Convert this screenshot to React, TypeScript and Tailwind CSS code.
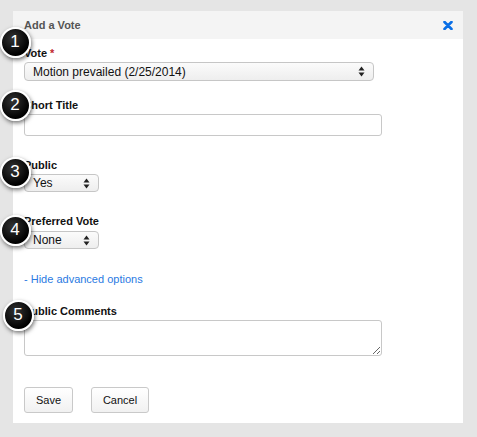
import React from "react";

const font = { fontFamily: '"Liberation Sans", Arial, sans-serif' };

// Small up/down arrows drawn at the right of each select box
const SelectArrows = () => (
  <svg width="7" height="11" viewBox="0 0 7 11" className="shrink-0">
    <path d="M3.5 0.5 L6.5 4.5 L0.5 4.5 Z" fill="#222" />
    <path d="M3.5 10.5 L6.5 6.5 L0.5 6.5 Z" fill="#222" />
  </svg>
);

const FakeSelect = ({ value, width }: { value: string; width: string }) => (
  <div
    className={`${width} flex items-center justify-between rounded-[4px] border border-[#c6c6c6] bg-gradient-to-b from-[#fbfbfb] to-[#eeeeee] pl-[8px] pr-[8px] text-[12px] text-[#111]`}
  >
    <span className="leading-none">{value}</span>
    <SelectArrows />
  </div>
);

const Label = ({ children, className = "" }: { children: React.ReactNode; className?: string }) => (
  <label className={`block h-[14px] text-[11px] font-bold leading-[14px] text-[#111] ${className}`}>
    {children}
  </label>
);

// Numbered callout bubble laid over the form
const Callout = ({ n, x, y }: { n: number; x: number; y: number }) => (
  <div
    className="absolute flex h-[31px] w-[31px] items-center justify-center rounded-full border-2 border-white bg-[radial-gradient(circle_at_40%_35%,#333_0%,#000_70%)] text-[17px] text-white shadow-[1px_2px_4px_rgba(0,0,0,0.55)]"
    style={{ left: x - 15.5, top: y - 15.5 }}
  >
    {n}
  </div>
);

export default function App() {
  return (
    <div className="relative h-[437px] w-[477px] bg-[#e5e5e5] pl-[13px] pt-[11px]" style={font}>
      <div className="flex h-[412px] w-[450px] flex-col bg-white">
        {/* Header */}
        <div className="flex h-[28px] items-center justify-between bg-[#f4f4f4] pl-[11px] pr-[10px]">
          <span className="text-[11px] font-bold text-[#555]">Add a Vote</span>
          <svg width="10" height="9" viewBox="0 0 10 9">
            <path d="M1.5 1 L8.5 8 M8.5 1 L1.5 8" stroke="#0a6fe6" strokeWidth="2.6" strokeLinecap="round" />
          </svg>
        </div>

        {/* Body */}
        <div className="flex flex-col pl-[11px]">
          <Label className="mt-[7px]">
            Vote <span className="text-[#c0272d]">*</span>
          </Label>
          <div className="mt-[2px] flex">
            <FakeSelect value="Motion prevailed (2/25/2014)" width="w-[350px] h-[19px]" />
          </div>

          <Label className="mt-[17px]">Short Title</Label>
          <input
            className="mt-[2px] h-[22px] w-[358px] rounded-[3px] border border-[#c8c8c8] bg-white outline-none"
            type="text"
          />

          <Label className="mt-[22px]">Public</Label>
          <div className="mt-[2px] flex">
            <FakeSelect value="Yes" width="w-[75px] h-[18px]" />
          </div>

          <Label className="mt-[22px]">Preferred Vote</Label>
          <div className="mt-[3px] flex">
            <FakeSelect value="None" width="w-[75px] h-[18px]" />
          </div>

          <a className="mt-[23px] block h-[14px] text-[11px] leading-[14px] text-[#2a7ae2]" href="#">
            - Hide advanced options
          </a>

          <Label className="mt-[18px]">Public Comments</Label>
          <textarea className="mt-[2px] h-[36px] w-[358px] rounded-[3px] border border-[#c8c8c8] bg-white outline-none" />

          <div className="mt-[31px] flex gap-[18px]">
            <button className="h-[26px] w-[49px] rounded-[3px] border border-[#c9c9c9] bg-gradient-to-b from-white to-[#f1f1f1] text-[11px] text-[#111]">
              Save
            </button>
            <button className="h-[26px] w-[58px] rounded-[3px] border border-[#c9c9c9] bg-gradient-to-b from-white to-[#f1f1f1] text-[11px] text-[#111]">
              Cancel
            </button>
          </div>
        </div>
      </div>

      <Callout n={1} x={15} y={42} />
      <Callout n={2} x={15} y={105} />
      <Callout n={3} x={15} y={172} />
      <Callout n={4} x={15} y={230} />
      <Callout n={5} x={18} y={315} />
    </div>
  );
}
